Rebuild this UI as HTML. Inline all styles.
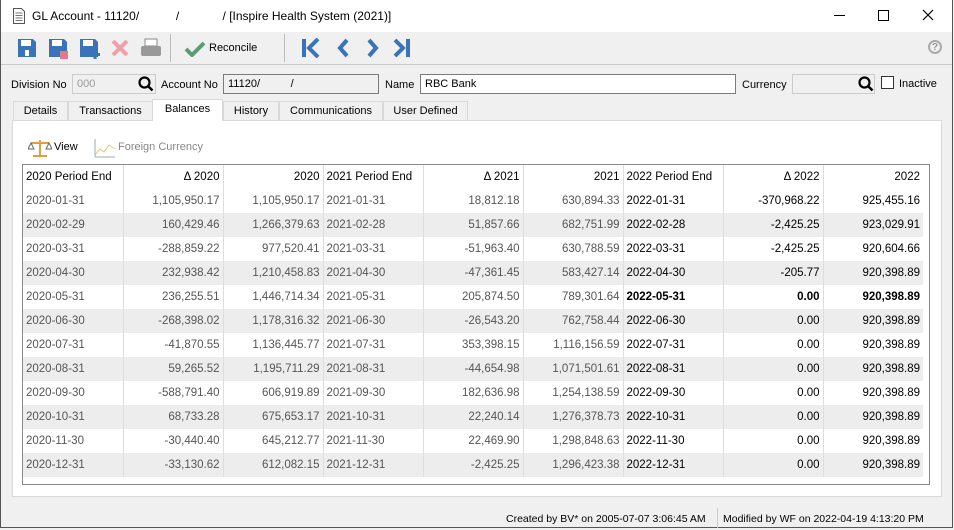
<!DOCTYPE html>
<html><head><meta charset="utf-8"><style>
*{margin:0;padding:0;box-sizing:border-box}
body{width:954px;height:530px;overflow:hidden;background:#f0f0f0;font-family:"Liberation Sans",sans-serif;font-size:11px;color:#000;position:relative}
.a{position:absolute}
.win{left:0;top:0;width:953px;height:528px;border-left:1px solid #555;border-right:1px solid #555;border-bottom:1px solid #555;background:#f0f0f0}
.title{left:1px;top:0;width:951px;height:32px;background:#fff}
.t{white-space:nowrap}
.inp{height:20px;border:1px solid #7a7a7a;background:#fff;padding:3px 4px;font-size:11px}
.tab{top:101px;height:20px;border:1px solid #d9d9d9;border-bottom:none;background:#f0f0f0;text-align:center;line-height:19px;font-size:11px}
table{border-collapse:collapse;position:absolute;left:23px;top:165px;table-layout:fixed}
td{height:24px;width:100px;padding:0 3px;border-left:1px solid #ddd;color:#555;white-space:nowrap;font-size:11.5px}
td.r{text-align:right}
td.k{color:#000}
tr.g td{background:#ededed}
tr.h td{background:#fff;color:#000}
tr.b td.k{font-weight:bold}
td:first-child{border-left:none}
</style></head><body>
<div class="a win"></div>
<div class="a title"></div>
<svg class="a" style="left:12px;top:8px" width="14" height="16" viewBox="0 0 14 16"><path d="M1.5 .5h8l3 3v12h-11z" fill="#fff" stroke="#555"/><path d="M3.5 5h7M3.5 7.5h7M3.5 10h7M3.5 12.5h7" stroke="#777"/></svg>
<div class="a t" style="left:32px;top:9px;font-size:12px">GL Account - 11120/&nbsp;&nbsp;&nbsp;&nbsp;&nbsp;&nbsp;&nbsp;&nbsp;&nbsp;&nbsp;&nbsp;/&nbsp;&nbsp;&nbsp;&nbsp;&nbsp;&nbsp;&nbsp;&nbsp;&nbsp;&nbsp;&nbsp;&nbsp;&nbsp;/ [Inspire Health System (2021)]</div>
<div class="a" style="left:834px;top:15px;width:11px;height:1px;background:#000"></div>
<div class="a" style="left:878px;top:10px;width:11px;height:11px;border:1px solid #000"></div>
<svg class="a" style="left:922px;top:9px" width="12" height="12"><path d="M1 1L11 11M11 1L1 11" stroke="#000" stroke-width="1.2"/></svg>
<div class="a" style="left:1px;top:64px;width:951px;height:1px;background:#c8c8c8"></div>
<div class="a" style="left:170px;top:34px;width:1px;height:28px;background:#bbb"></div>
<div class="a" style="left:284px;top:34px;width:1px;height:28px;background:#bbb"></div>
<svg class="a" style="left:17px;top:38px" width="20" height="20"><path d="M1 1h15l3 3v15H1z" fill="#3a73b8"/><rect x="4" y="2" width="10" height="6" fill="#fff"/><rect x="8" y="12" width="4" height="6" fill="#fff"/></svg>
<svg class="a" style="left:48px;top:38px" width="22" height="22"><path d="M1 1h15l3 3v15H1z" fill="#3a73b8"/><rect x="4" y="2" width="10" height="6" fill="#fff"/><rect x="12" y="13" width="8" height="8" fill="#e07a8a"/></svg>
<svg class="a" style="left:79px;top:38px" width="22" height="22"><path d="M1 1h15l3 3v15H1z" fill="#3a73b8"/><rect x="4" y="2" width="10" height="6" fill="#fff"/><path d="M16 12v9M12 16.5h9" stroke="#3a73b8" stroke-width="3"/></svg>
<svg class="a" style="left:111px;top:39px" width="18" height="18"><path d="M2 2L16 16M16 2L2 16" stroke="#f0a0a8" stroke-width="4"/></svg>
<svg class="a" style="left:140px;top:38px" width="22" height="20"><rect x="5" y="1" width="12" height="7" fill="#fff" stroke="#888"/><rect x="1" y="8" width="20" height="10" rx="2" fill="#999"/></svg>
<svg class="a" style="left:184px;top:41px" width="22" height="16"><path d="M2 8l6 6L20 2" stroke="#5a9a74" stroke-width="4" fill="none"/></svg>
<div class="a t" style="left:209px;top:42px">Reconcile</div>
<svg class="a" style="left:300px;top:38px" width="120" height="20" fill="#3a73b8"><rect x="2" y="1" width="4" height="18"/><path d="M18 1l-9 9 9 9" stroke="#3a73b8" stroke-width="4" fill="none"/><path d="M47 2l-7 8 7 8" stroke="#3a73b8" stroke-width="4" fill="none"/><path d="M69 2l7 8-7 8" stroke="#3a73b8" stroke-width="4" fill="none"/><path d="M95 2l8 8-8 8" stroke="#3a73b8" stroke-width="4" fill="none"/><rect x="106" y="1" width="4" height="18"/></svg>
<div class="a" style="left:928px;top:40px;width:14px;height:14px;border:2px solid #aaa;border-radius:50%;color:#999;font-size:10px;font-weight:bold;text-align:center;line-height:11px">?</div>
<div class="a t" style="left:11px;top:79px">Division No</div>
<div class="a inp" style="left:72px;top:74px;width:84px;background:#f0f0f0;border-color:#ccc;color:#999">000</div>
<svg class="a" style="left:138px;top:76px" width="16" height="16"><circle cx="6.5" cy="6.5" r="5" stroke="#000" stroke-width="2.2" fill="none"/><path d="M10 10l4.5 4.5" stroke="#000" stroke-width="2.6"/></svg>
<div class="a t" style="left:161px;top:79px">Account No</div>
<div class="a inp" style="left:223px;top:74px;width:156px;background:#f0f0f0">11120/&nbsp;&nbsp;&nbsp;&nbsp;&nbsp;&nbsp;&nbsp;&nbsp;&nbsp;&nbsp;/</div>
<div class="a t" style="left:385px;top:79px">Name</div>
<div class="a inp" style="left:420px;top:74px;width:316px">RBC Bank</div>
<div class="a t" style="left:742px;top:79px">Currency</div>
<div class="a inp" style="left:792px;top:74px;width:83px;background:#f0f0f0;border-color:#ccc"></div>
<svg class="a" style="left:858px;top:76px" width="16" height="16"><circle cx="6.5" cy="6.5" r="5" stroke="#000" stroke-width="2.2" fill="none"/><path d="M10 10l4.5 4.5" stroke="#000" stroke-width="2.6"/></svg>
<div class="a" style="left:881px;top:76px;width:13px;height:13px;border:1px solid #333;background:#fff"></div>
<div class="a t" style="left:899px;top:78px">Inactive</div>
<div class="a tab" style="left:13px;width:55px">Details</div>
<div class="a tab" style="left:68px;width:85px">Transactions</div>
<div class="a tab" style="left:152px;top:99px;height:22px;width:71px;background:#fff;z-index:2">Balances</div>
<div class="a tab" style="left:223px;width:56px">History</div>
<div class="a tab" style="left:279px;width:104px">Communications</div>
<div class="a tab" style="left:383px;width:85px">User Defined</div>
<div class="a" style="left:12px;top:120px;width:930px;height:377px;background:#fff;border:1px solid #d9d9d9"></div>
<svg class="a" style="left:28px;top:138px" width="24" height="20"><path d="M12 2v15M3 5h18M5 18h14" stroke="#e0a040" stroke-width="2"/><path d="M3 5l-3 6h6zM21 5l-3 6h6z" fill="none" stroke="#666"/></svg>
<div class="a t" style="left:54px;top:141px">View</div>
<svg class="a" style="left:94px;top:138px" width="22" height="20"><path d="M1 17l5-6 4 3 5-7 6 4" stroke="#e8c870" fill="none"/><path d="M1 19h20M1 1v18" stroke="#9ab"/></svg>
<div class="a t" style="left:118px;top:141px;color:#888">Foreign Currency</div>
<div class="a" style="left:22px;top:164px;width:908px;height:321px;border:1px solid #8a8a8a;background:#fff"></div>
<table>
<tr class="h"><td>2020 Period End</td><td class="r">Δ 2020</td><td class="r">2020</td><td>2021 Period End</td><td class="r">Δ 2021</td><td class="r">2021</td><td>2022 Period End</td><td class="r">Δ 2022</td><td class="r">2022</td></tr>
<tr><td>2020-01-31</td><td class="r">1,105,950.17</td><td class="r">1,105,950.17</td><td>2021-01-31</td><td class="r">18,812.18</td><td class="r">630,894.33</td><td class="k">2022-01-31</td><td class="r k">-370,968.22</td><td class="r k">925,455.16</td></tr>
<tr class="g"><td>2020-02-29</td><td class="r">160,429.46</td><td class="r">1,266,379.63</td><td>2021-02-28</td><td class="r">51,857.66</td><td class="r">682,751.99</td><td class="k">2022-02-28</td><td class="r k">-2,425.25</td><td class="r k">923,029.91</td></tr>
<tr><td>2020-03-31</td><td class="r">-288,859.22</td><td class="r">977,520.41</td><td>2021-03-31</td><td class="r">-51,963.40</td><td class="r">630,788.59</td><td class="k">2022-03-31</td><td class="r k">-2,425.25</td><td class="r k">920,604.66</td></tr>
<tr class="g"><td>2020-04-30</td><td class="r">232,938.42</td><td class="r">1,210,458.83</td><td>2021-04-30</td><td class="r">-47,361.45</td><td class="r">583,427.14</td><td class="k">2022-04-30</td><td class="r k">-205.77</td><td class="r k">920,398.89</td></tr>
<tr class="b"><td>2020-05-31</td><td class="r">236,255.51</td><td class="r">1,446,714.34</td><td>2021-05-31</td><td class="r">205,874.50</td><td class="r">789,301.64</td><td class="k">2022-05-31</td><td class="r k">0.00</td><td class="r k">920,398.89</td></tr>
<tr class="g"><td>2020-06-30</td><td class="r">-268,398.02</td><td class="r">1,178,316.32</td><td>2021-06-30</td><td class="r">-26,543.20</td><td class="r">762,758.44</td><td class="k">2022-06-30</td><td class="r k">0.00</td><td class="r k">920,398.89</td></tr>
<tr><td>2020-07-31</td><td class="r">-41,870.55</td><td class="r">1,136,445.77</td><td>2021-07-31</td><td class="r">353,398.15</td><td class="r">1,116,156.59</td><td class="k">2022-07-31</td><td class="r k">0.00</td><td class="r k">920,398.89</td></tr>
<tr class="g"><td>2020-08-31</td><td class="r">59,265.52</td><td class="r">1,195,711.29</td><td>2021-08-31</td><td class="r">-44,654.98</td><td class="r">1,071,501.61</td><td class="k">2022-08-31</td><td class="r k">0.00</td><td class="r k">920,398.89</td></tr>
<tr><td>2020-09-30</td><td class="r">-588,791.40</td><td class="r">606,919.89</td><td>2021-09-30</td><td class="r">182,636.98</td><td class="r">1,254,138.59</td><td class="k">2022-09-30</td><td class="r k">0.00</td><td class="r k">920,398.89</td></tr>
<tr class="g"><td>2020-10-31</td><td class="r">68,733.28</td><td class="r">675,653.17</td><td>2021-10-31</td><td class="r">22,240.14</td><td class="r">1,276,378.73</td><td class="k">2022-10-31</td><td class="r k">0.00</td><td class="r k">920,398.89</td></tr>
<tr><td>2020-11-30</td><td class="r">-30,440.40</td><td class="r">645,212.77</td><td>2021-11-30</td><td class="r">22,469.90</td><td class="r">1,298,848.63</td><td class="k">2022-11-30</td><td class="r k">0.00</td><td class="r k">920,398.89</td></tr>
<tr class="g"><td>2020-12-31</td><td class="r">-33,130.62</td><td class="r">612,082.15</td><td>2021-12-31</td><td class="r">-2,425.25</td><td class="r">1,296,423.38</td><td class="k">2022-12-31</td><td class="r k">0.00</td><td class="r k">920,398.89</td></tr>
</table>
<div class="a t" style="left:506px;top:513px;font-size:10.5px">Created by BV* on 2005-07-07 3:06:45 AM</div>
<div class="a" style="left:717px;top:508px;width:1px;height:20px;background:#ccc"></div>
<div class="a t" style="left:723px;top:513px;font-size:10.5px">Modified by WF on 2022-04-19 4:13:20 PM</div>
</body></html>
